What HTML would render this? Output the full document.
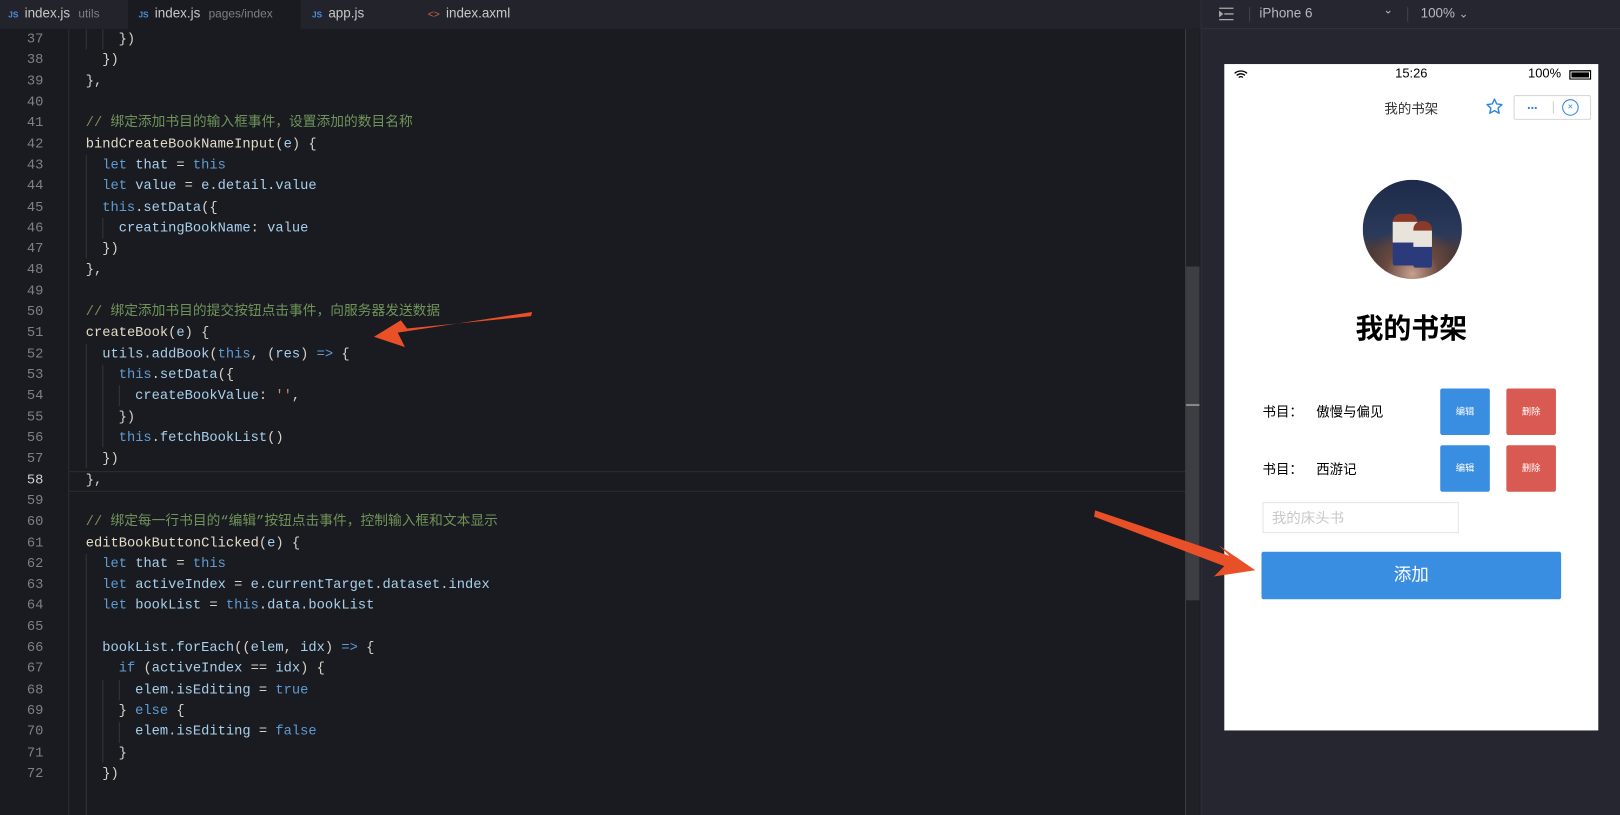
<!DOCTYPE html>
<html><head><meta charset="utf-8"><style>
*{margin:0;padding:0;box-sizing:border-box}
body{width:1620px;height:789px;overflow:hidden;background:#1a1b20;font-family:"Liberation Sans","Noto Sans CJK SC",sans-serif;position:relative}
#w{position:absolute;left:0;top:0;width:1568px;height:764px;transform:scale(1.03316);transform-origin:0 0}
.tabs{position:absolute;left:0;top:0;width:1162px;height:28px;background:#22232b;}
.tab{position:absolute;top:0;height:28px;font-size:13px;color:#c8c8c8;line-height:26px}
.tab small{color:#7d7f88;font-size:11.5px;margin-left:8px}
.tab b{font-size:8px;color:#4a8fe0;margin-right:6px;font-weight:bold}
.gut{position:absolute;left:0;top:28px;width:67px;height:761px;background:#1a1b20;border-right:1px solid #2c2d33}
.code{position:absolute;left:0;top:28px;font-family:"Liberation Mono","Noto Sans CJK SC",monospace;font-size:13.3px;line-height:20.31px;white-space:pre;color:#d6d3c8}
.ln{display:inline-block;width:42px;text-align:right;color:#7e8088;margin-right:25px}
.c{color:#6f9359}.k{color:#5f9bd3}.v{color:#a8d0ec}.f{color:#e3dcc6}.s{color:#d08a6a}
.hl{position:absolute;left:67px;top:456px;width:1080px;height:20px;border-top:1px solid #2c2d33;border-bottom:1px solid #2c2d33}
.guide{position:absolute;width:1px;background:#34353b}
.sb{position:absolute;left:1147px;top:28px;width:14px;height:761px;background:#202127;border-left:1px solid #3a3b40}
.thumb{position:absolute;left:1148px;top:258px;width:13px;height:323px;background:#3d3e44}
.right{position:absolute;left:1162px;top:0;width:458px;height:789px;background:#25262f;border-left:1px solid #2e2f38}
.tb{position:absolute;left:0;top:0;width:458px;height:28px;border-bottom:1px solid #30313a;color:#b8b9c0;font-size:13px}
.phone{position:absolute;left:1185px;top:62px;width:362px;height:645px;background:#fff}
.btn{position:absolute;width:48px;height:45px;color:#fff;font-size:9px;text-align:center;line-height:45px;border-radius:2px}
</style></head><body><div id="w">
<div class="tabs">
 <div class="tab" style="left:0;width:124px;padding-left:8px"><b>JS</b>index.js<small>utils</small></div>
 <div class="tab" style="left:124px;width:167px;background:#1a1b20;padding-left:10px"><b>JS</b>index.js<small>pages/index</small></div>
 <div class="tab" style="left:302px"><b>JS</b>app.js</div>
 <div class="tab" style="left:414px"><span style="color:#d0674a;font-size:10px;margin-right:6px">&lt;&gt;</span>index.axml</div>
</div>
<div class="gut"></div>
<div class="hl"></div>
<div class="guide" style="left:83px;top:28px;height:20px"></div>
<div class="guide" style="left:99px;top:28px;height:20px"></div>
<div class="guide" style="left:83px;top:150px;height:100px"></div>
<div class="guide" style="left:99px;top:211px;height:20px"></div>
<div class="guide" style="left:83px;top:333px;height:120px"></div>
<div class="guide" style="left:99px;top:353px;height:80px"></div>
<div class="guide" style="left:115px;top:373px;height:20px"></div>
<div class="guide" style="left:83px;top:536px;height:253px"></div>
<div class="guide" style="left:99px;top:658px;height:80px"></div>
<div class="guide" style="left:115px;top:658px;height:20px"></div>
<div class="guide" style="left:115px;top:699px;height:20px"></div>
<div class="code"><span class="ln">37</span>      })
<span class="ln">38</span>    })
<span class="ln">39</span>  },
<span class="ln">40</span>
<span class="ln">41</span>  <span class="c">// 绑定添加书目的输入框事件，设置添加的数目名称</span>
<span class="ln">42</span>  <span class="f">bindCreateBookNameInput</span>(<span class="v">e</span>) {
<span class="ln">43</span>    <span class="k">let</span> <span class="v">that</span> = <span class="k">this</span>
<span class="ln">44</span>    <span class="k">let</span> <span class="v">value</span> = <span class="v">e.detail.value</span>
<span class="ln">45</span>    <span class="k">this</span>.<span class="v">setData</span>({
<span class="ln">46</span>      <span class="v">creatingBookName</span>: <span class="v">value</span>
<span class="ln">47</span>    })
<span class="ln">48</span>  },
<span class="ln">49</span>
<span class="ln">50</span>  <span class="c">// 绑定添加书目的提交按钮点击事件，向服务器发送数据</span>
<span class="ln">51</span>  <span class="f">createBook</span>(<span class="v">e</span>) {
<span class="ln">52</span>    <span class="v">utils.addBook</span>(<span class="k">this</span>, (<span class="v">res</span>) <span class="k">=&gt;</span> {
<span class="ln">53</span>      <span class="k">this</span>.<span class="v">setData</span>({
<span class="ln">54</span>        <span class="v">createBookValue</span>: <span class="s">''</span>,
<span class="ln">55</span>      })
<span class="ln">56</span>      <span class="k">this</span>.<span class="v">fetchBookList</span>()
<span class="ln">57</span>    })
<span class="ln" style="color:#d0d0d0">58</span>  },
<span class="ln">59</span>
<span class="ln">60</span>  <span class="c">// 绑定每一行书目的“编辑”按钮点击事件，控制输入框和文本显示</span>
<span class="ln">61</span>  <span class="f">editBookButtonClicked</span>(<span class="v">e</span>) {
<span class="ln">62</span>    <span class="k">let</span> <span class="v">that</span> = <span class="k">this</span>
<span class="ln">63</span>    <span class="k">let</span> <span class="v">activeIndex</span> = <span class="v">e.currentTarget.dataset.index</span>
<span class="ln">64</span>    <span class="k">let</span> <span class="v">bookList</span> = <span class="k">this</span>.<span class="v">data.bookList</span>
<span class="ln">65</span>
<span class="ln">66</span>    <span class="v">bookList.forEach</span>((<span class="v">elem</span>, <span class="v">idx</span>) <span class="k">=&gt;</span> {
<span class="ln">67</span>      <span class="k">if</span> (<span class="v">activeIndex</span> == <span class="v">idx</span>) {
<span class="ln">68</span>        <span class="v">elem.isEditing</span> = <span class="k">true</span>
<span class="ln">69</span>      } <span class="k">else</span> {
<span class="ln">70</span>        <span class="v">elem.isEditing</span> = <span class="k">false</span>
<span class="ln">71</span>      }
<span class="ln">72</span>    })</div>
<div class="sb"></div><div class="thumb"></div>
<div style="position:absolute;left:1148px;top:391px;width:13px;height:2px;background:#888"></div>
<div class="right">
 <div class="tb">
  <svg style="position:absolute;left:17px;top:7px" width="14" height="13"><path d="M0 1h14M5 6.5h9M0 12h14M0 4l3 2.5-3 2.5z" stroke="#aaa" stroke-width="1.3" fill="#aaa"/></svg>
  <div style="position:absolute;left:46px;top:7px;width:1px;height:14px;background:#444"></div>
  <span style="position:absolute;left:56px;top:5px">iPhone 6</span>
  <span style="position:absolute;left:176px;top:3px;font-size:11px">&#8964;</span>
  <div style="position:absolute;left:199px;top:7px;width:1px;height:14px;background:#444"></div>
  <span style="position:absolute;left:212px;top:5px">100% <span style="font-size:11px">&#8964;</span></span>
  <div style="position:absolute;left:432px;top:6px;width:10px;height:12px;background:#aaa;border-radius:1px"></div>
  <div style="position:absolute;left:438px;top:12px;width:8px;height:8px;background:#aaa;border-radius:50%;border:1px solid #25262f"></div>
 </div>
</div>
<div class="phone">
 <svg style="position:absolute;left:9px;top:5px" width="14" height="10"><path d="M1 4a9 9 0 0 1 12 0M3 6a6 6 0 0 1 8 0M5 8a3 3 0 0 1 4 0" stroke="#000" stroke-width="1.3" fill="none"/></svg>
 <div style="position:absolute;left:0;width:362px;top:2px;text-align:center;font-size:12.5px;color:#000">15:26</div>
 <div style="position:absolute;right:36px;top:2px;font-size:12.5px;color:#000">100%</div>
 <div style="position:absolute;right:7px;top:6px;width:21px;height:9px;border:1px solid #000;background:#000;box-shadow:inset 0 0 0 1px #fff"></div>
 <div style="position:absolute;left:0;width:362px;top:33px;text-align:center;font-size:13px;color:#333">我的书架</div>
 <svg style="position:absolute;left:253px;top:33px" width="17" height="16"><path d="M8.5 1l2.2 4.6 5 .6-3.7 3.4 1 5-4.5-2.5-4.5 2.5 1-5L1.3 6.2l5-.6z" fill="none" stroke="#2f86e0" stroke-width="1.4" stroke-linejoin="round"/></svg>
 <div style="position:absolute;left:280px;top:30px;width:75px;height:24px;border:1px solid #d8d8d8;border-radius:2px"></div>
 <div style="position:absolute;left:293px;top:35px;color:#2f86e0;font-size:13px;font-weight:bold;letter-spacing:-1px">···</div>
 <div style="position:absolute;left:318px;top:36px;width:1px;height:12px;background:#ccc"></div>
 <div style="position:absolute;left:327px;top:34px;width:16px;height:16px;border:1.5px solid #2f86e0;border-radius:50%;color:#2f86e0;font-size:9px;text-align:center;line-height:13px">×</div>
 <div style="position:absolute;left:134px;top:112px;width:96px;height:96px;border-radius:50%;background:radial-gradient(circle at 50% 95%,#c8a090 0,#6a4a40 25%,transparent 45%),linear-gradient(#1e2a4a 0,#2a3a5a 55%,#4a3a3a 70%,#3a2e2e 100%)"></div>
 <div style="position:absolute;left:163px;top:145px;width:24px;height:50px;background:linear-gradient(#8a3a2a 0,#8a3a2a 15%,#e8e4dc 16%,#e8e4dc 55%,#2a3a7a 56%);border-radius:8px 8px 2px 2px"></div>
 <div style="position:absolute;left:183px;top:152px;width:18px;height:45px;background:linear-gradient(#8a3a2a 0,#8a3a2a 20%,#e8e4dc 21%,#e8e4dc 55%,#2a3a7a 56%);border-radius:8px 8px 2px 2px"></div>
 <div style="position:absolute;left:0;width:362px;top:234px;text-align:center;font-size:27px;font-weight:bold;color:#000">我的书架</div>
 <div style="position:absolute;left:37px;top:326px;font-size:13px;color:#000">书目：</div>
 <div style="position:absolute;left:89px;top:326px;font-size:13px;color:#000">傲慢与偏见</div>
 <div class="btn" style="left:209px;top:314px;background:#3a8ee2">编辑</div>
 <div class="btn" style="left:273px;top:314px;background:#d95a52">删除</div>
 <div style="position:absolute;left:37px;top:382px;font-size:13px;color:#000">书目：</div>
 <div style="position:absolute;left:89px;top:382px;font-size:13px;color:#000">西游记</div>
 <div class="btn" style="left:209px;top:369px;background:#3a8ee2">编辑</div>
 <div class="btn" style="left:273px;top:369px;background:#d95a52">删除</div>
 <div style="position:absolute;left:37px;top:424px;width:190px;height:30px;border:1px solid #e4e4e4;font-size:14px;color:#c8c8c8;padding:4px 8px">我的床头书</div>
 <div style="position:absolute;left:36px;top:472px;width:290px;height:46px;background:#3a8ee2;border-radius:2px;color:#fff;font-size:17px;text-align:center;line-height:46px">添加</div>
</div>
<svg style="position:absolute;left:0;top:0" width="1620" height="789">
 <path d="M515 302L385 322L392 336L362 326L388 310L394 318L514 306Z" fill="#ea5028"/>
 <path d="M1060 494L1190 538L1180 528L1215 552L1175 558L1185 548L1059 500Z" fill="#ea5028"/>
</svg>
</div></body></html>
